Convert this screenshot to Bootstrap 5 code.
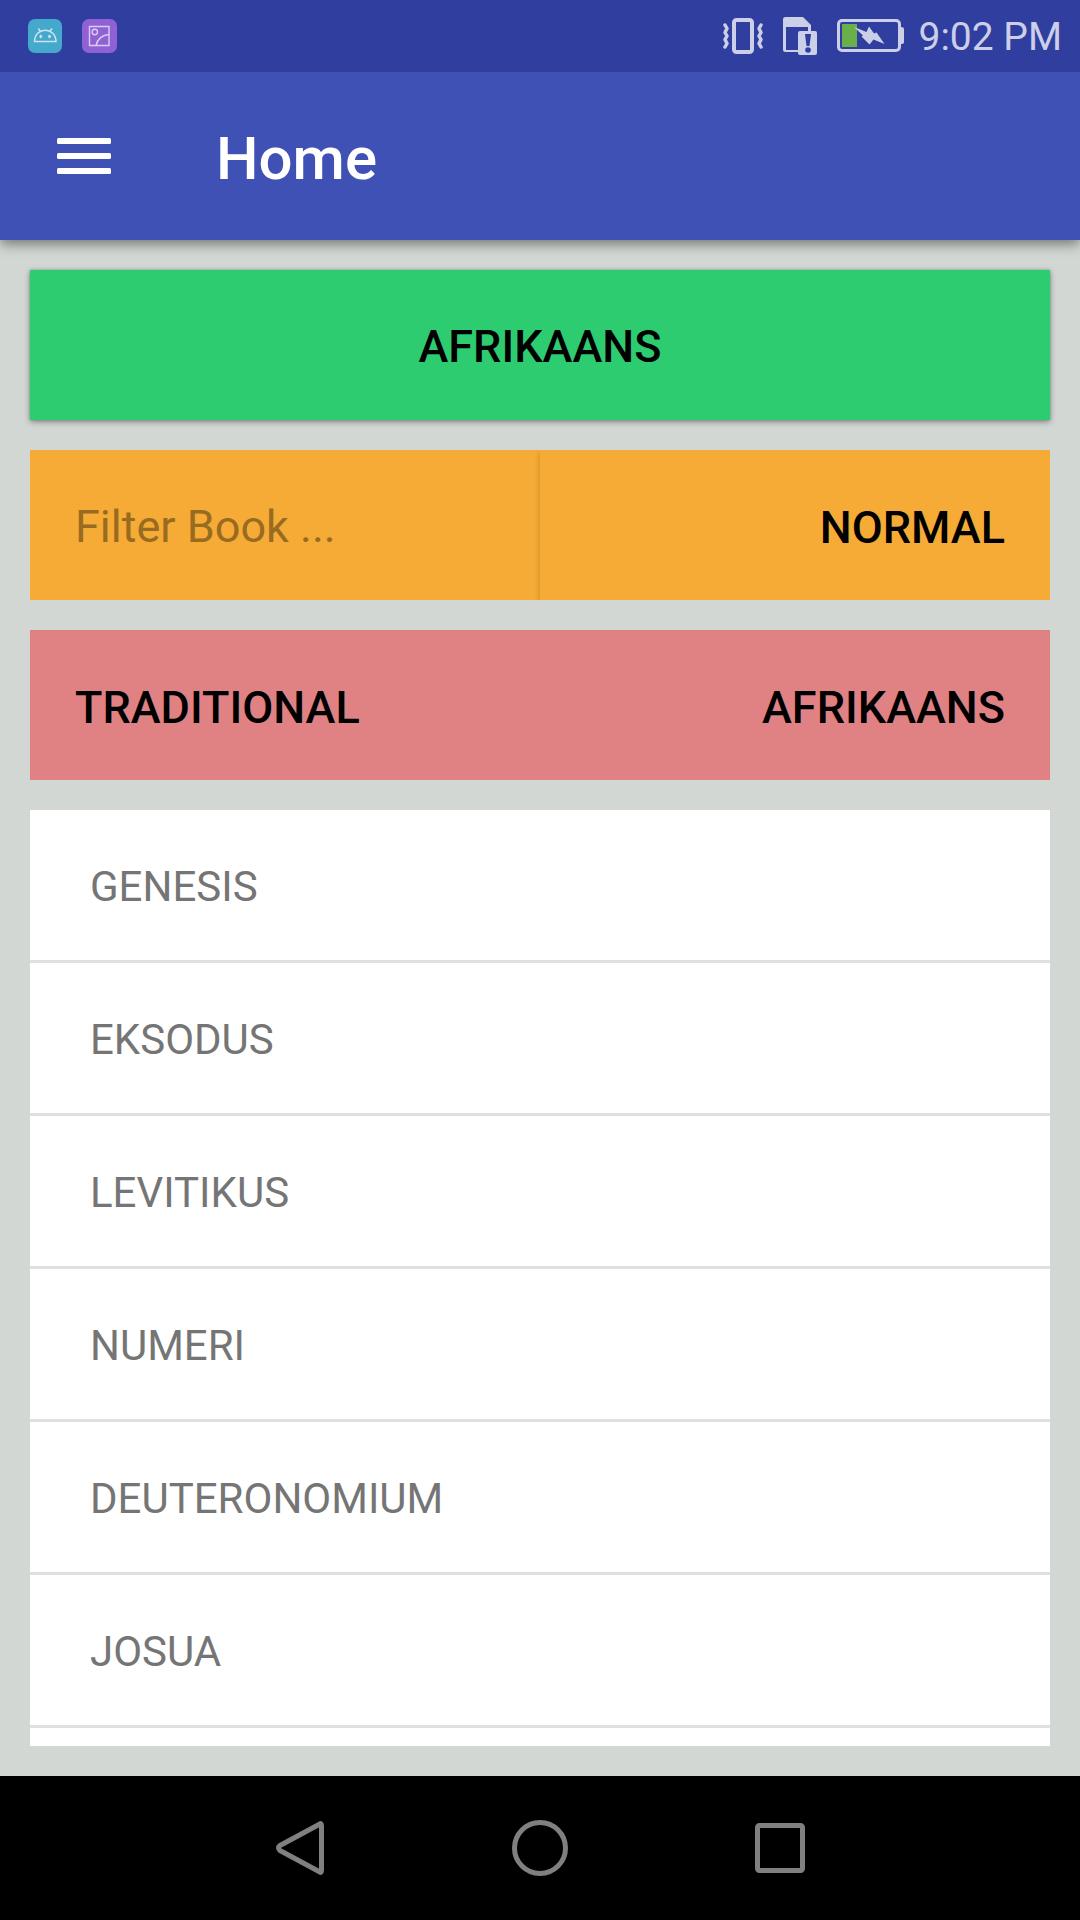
<!DOCTYPE html>
<html lang="af">
<head>
<meta charset="utf-8">
<meta name="viewport" content="width=device-width, initial-scale=1">
<title>Home</title>
<link href="https://cdn.jsdelivr.net/npm/bootstrap@5.3.0/dist/css/bootstrap.min.css" rel="stylesheet">
<style>
  body { font-family: Roboto, "Noto Sans", sans-serif; background: #d2d7d3; line-height: 1.2; }
  svg { display: block; flex: none; }
  .status-bar { height: 72px; background: #303f9f; color: #cbcfe8; padding: 0 18px 0 28px; font-size: 39px; z-index: 3; }
  .status-left, .status-icons { gap: 20px; }
  .status-right { gap: 14px; }
  .clock { padding-top: 3px; }
  .app-bar { height: 168px; background: #3f51b5; box-shadow: 0 4px 12px rgba(0,0,0,.45); z-index: 2; padding: 0 57px; gap: 105px; }
  .app-title { font-size: 60px; font-weight: 500; padding-top: 5px; }
  .content-area { padding: 30px; gap: 30px; min-height: 0; }
  .bar-row { min-height: 150px; }
  .bar-row .btn, .bar-row .form-control { font-size: 45px; line-height: 54px; padding: 4px 45px 0; border: 0; border-radius: 0; }
  .bar-row .btn { font-weight: 500; color: #000; }
  .row .btn { padding-top: 6px; }
  .bar-row .language { background: #2ecc71; box-shadow: 0 2px 6px rgba(0,0,0,.35), 0 0 3px rgba(0,0,0,.2); }
  .filters { background: #f5ab35; }
  .filters .form-control { background: transparent; box-shadow: none; color: #000; }
  .filters .form-control::placeholder { color: #996b21; opacity: 1; }
  .filters .btn { background: #f5ab35; box-shadow: 0 3px 6px rgba(0,0,0,.2); }
  .versions { background: #e08283; }
  .books { background: #fff; border-radius: 0; min-height: 0; }
  .books .list-group-item { font-size: 42px; line-height: 50px; color: #757575; padding: 52px 60px 48px; border: 0; border-bottom: 3px solid #e0e0e0; border-radius: 0; background: #fff; }
  .nav-keys { height: 144px; background: #000; gap: 168px; }
  .nav-keys .btn { padding: 0; border: 0; }
</style>
</head>
<body>
<div class="vh-100 d-flex flex-column overflow-hidden">
  <div class="status-bar position-relative d-flex align-items-center justify-content-between flex-shrink-0">
    <div class="status-left d-flex align-items-center">
      <svg width="34" height="34" viewBox="0 0 34 34" fill="none" stroke="#cde3ef" stroke-width="1.5" aria-hidden="true">
        <rect width="34" height="34" rx="7" fill="#45a9cb" stroke="none"/>
        <path d="M6.500 22.500C7 7.500 27.500 7.500 28 22.500ZM10.300 9.500l2.500 3.500M24 9.500l-2.500 3.500"/>
        <path d="M12.800 15.800v3.400M11.300 17.500h3M21.500 15.800v3.400M20 17.500h3"/>
      </svg>
      <svg width="35" height="34" viewBox="0 0 35 34" fill="none" stroke="#dacdf0" stroke-width="1.400" aria-hidden="true">
        <rect width="35" height="34" rx="7" fill="#8f61d5" stroke="none"/>
        <path d="M7.500 7.500h19.500v19H7.500zM14 26.500C15.500 20 20.500 16 27 15.500"/>
        <circle cx="12.800" cy="13" r="2.700"/>
      </svg>
    </div>
    <div class="status-right d-flex align-items-center">
      <div class="status-icons d-flex align-items-center">
        <svg width="40" height="36" viewBox="0 0 40 36" fill="none" stroke="#cbcfe8" aria-hidden="true">
          <rect x="11" y="2" width="18" height="32" rx="2.500" stroke-width="4"/>
          <path d="M2 7l2 3.500-2 4L4 18l-2 3.500 2 4L2 29M38 7l-2 3.500 2 4-2 3.500 2 3.500-2 4 2 3.500" stroke-width="3.500" stroke-linejoin="round" stroke-linecap="round"/>
        </svg>
        <svg width="34" height="38" viewBox="0 0 34 38" aria-hidden="true">
          <path d="M2.500 0H20l8 8v7h-3v-5H3v23h12v2H2.500Q0 35 0 32.500V2.500Q0 0 2.500 0Z" fill="#cbcfe8"/>
          <rect x="15" y="14" width="19" height="24" rx="2" fill="#cbcfe8"/>
          <path d="M22 17h6l-1.500 12h-3Z" fill="#303f9f"/>
          <circle cx="25" cy="33" r="2.800" fill="#303f9f"/>
        </svg>
        <svg width="67" height="33" viewBox="0 0 67 33" aria-hidden="true">
          <rect x="1.500" y="1.500" width="61" height="30" rx="3.500" fill="none" stroke="#cbcfe8" stroke-width="3"/>
          <path d="M64 8q3 0 3 2v13q0 2-3 2Z" fill="#cbcfe8"/>
          <rect x="5" y="5" width="15" height="23" fill="#6ab04a"/>
          <path d="M17 8L29.500 13L32 7.500L37 14.500L39.500 13.500L47.500 25L36.500 20.500L32.500 25.500L24.500 17.500L26 16.500Z" fill="#cbcfe8"/>
        </svg>
      </div>
      <span class="clock">9:02 PM</span>
    </div>
  </div>

  <header class="app-bar d-flex align-items-center flex-shrink-0 position-relative text-white">
    <button class="btn p-0 border-0" type="button" aria-label="Menu">
      <svg width="54" height="36" viewBox="0 0 54 36" fill="#fff" aria-hidden="true">
        <rect width="54" height="6" rx="1.500"/><rect y="15" width="54" height="6" rx="1.500"/><rect y="30" width="54" height="6" rx="1.500"/>
      </svg>
    </button>
    <h1 class="app-title mb-0">Home</h1>
  </header>

  <main class="content-area d-flex flex-column flex-grow-1">
    <div class="bar-row d-flex">
      <button class="btn language flex-fill" type="button">AFRIKAANS</button>
    </div>
    <div class="bar-row filters row g-0 overflow-hidden">
      <div class="col-6 d-flex">
        <input class="form-control" type="text" placeholder="Filter Book ..." aria-label="Filter Book">
      </div>
      <div class="col-6 d-flex">
        <button class="btn flex-fill text-end" type="button">NORMAL</button>
      </div>
    </div>
    <div class="bar-row versions row g-0">
      <div class="col-6 d-flex">
        <button class="btn flex-fill text-start" type="button">TRADITIONAL</button>
      </div>
      <div class="col-6 d-flex">
        <button class="btn flex-fill text-end" type="button">AFRIKAANS</button>
      </div>
    </div>
    <div class="books list-group flex-grow-1 overflow-hidden">
      <a class="list-group-item list-group-item-action" href="#">GENESIS</a>
      <a class="list-group-item list-group-item-action" href="#">EKSODUS</a>
      <a class="list-group-item list-group-item-action" href="#">LEVITIKUS</a>
      <a class="list-group-item list-group-item-action" href="#">NUMERI</a>
      <a class="list-group-item list-group-item-action" href="#">DEUTERONOMIUM</a>
      <a class="list-group-item list-group-item-action" href="#">JOSUA</a>
    </div>
  </main>

  <nav class="nav-keys d-flex align-items-center justify-content-center flex-shrink-0" aria-label="System">
    <button class="btn" type="button" aria-label="Back">
      <svg width="72" height="72" viewBox="0 0 72 72" fill="none" stroke="#808080" stroke-width="5" stroke-linejoin="round" aria-hidden="true"><path d="M55 12.500Q57.500 10 57.500 14V58Q57.500 62 55 59.500L16 38.500Q13 36 16 33.500Z"/></svg>
    </button>
    <button class="btn" type="button" aria-label="Home">
      <svg width="72" height="72" viewBox="0 0 72 72" fill="none" stroke="#808080" stroke-width="5" aria-hidden="true"><circle cx="36" cy="36" r="25.500"/></svg>
    </button>
    <button class="btn" type="button" aria-label="Recent apps">
      <svg width="72" height="72" viewBox="0 0 72 72" fill="none" stroke="#808080" stroke-width="5" aria-hidden="true"><rect x="13.500" y="13.500" width="45" height="45" rx="2"/></svg>
    </button>
  </nav>
</div>
<script src="https://cdn.jsdelivr.net/npm/bootstrap@5.3.0/dist/js/bootstrap.bundle.min.js"></script>
</body>
</html>
